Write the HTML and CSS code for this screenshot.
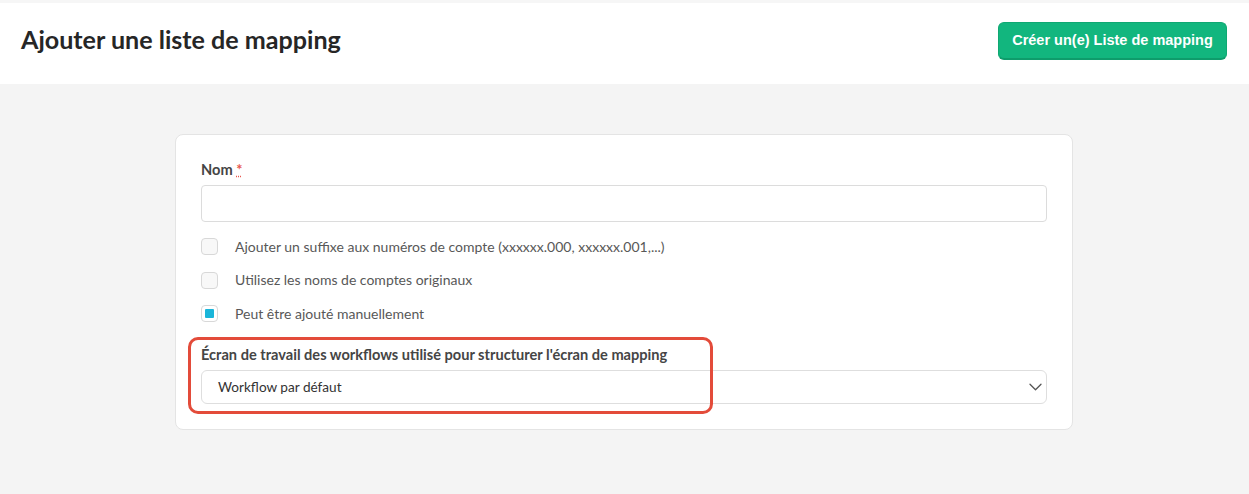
FILE: index.html
```html
<!DOCTYPE html>
<html lang="fr">
<head>
<meta charset="utf-8">
<link rel="stylesheet" href="styles.css">
</head>
<body>
<header class="topbar">
  <h1 class="title">Ajouter une liste de mapping</h1>
  <button class="btn-primary">Créer un(e) Liste de mapping</button>
</header>
<main class="content">
  <form class="card">
    <label class="field-label">Nom <abbr class="req" title="requis">*</abbr></label>
    <input class="text-input" type="text">
    <div class="checks">
      <label class="check"><span class="box"></span><span>Ajouter un suffixe aux numéros de compte (xxxxxx.000, xxxxxx.001,...)</span></label>
      <label class="check"><span class="box"></span><span>Utilisez les noms de comptes originaux</span></label>
      <label class="check"><span class="box checked"></span><span>Peut être ajouté manuellement</span></label>
    </div>
    <div class="select-group">
      <div class="highlight"></div>
      <label class="field-label">Écran de travail des workflows utilisé pour structurer l'écran de mapping</label>
      <div class="select">
        <span>Workflow par défaut</span>
        <svg class="chev" width="13" height="8" viewBox="0 0 13 8"><path d="M1 1.2l5.5 5.5 5.5-5.5" fill="none" stroke="#555" stroke-width="1.3" stroke-linecap="round" stroke-linejoin="round"/></svg>
      </div>
    </div>
  </form>
</main>
</body>
</html>
```

FILE: styles.css
```css
* { box-sizing: border-box; }
html, body { margin: 0; padding: 0; }
body {
  background: #f4f4f4;
  font-family: Lato, "Liberation Sans", sans-serif;
  width: 1249px;
  height: 494px;
  overflow: hidden;
}
.topbar {
  height: 84px;
  background: #fff;
  border-top: 3px solid #f6f6f6;
  display: flex;
  align-items: center;
  justify-content: space-between;
  padding: 0 22px 0 21px;
}
.title {
  margin: 0;
  font-size: 25.1px;
  font-weight: 700;
  color: #262626;
  padding-bottom: 10px;
}
.btn-primary {
  height: 38px;
  width: 229px;
  background: #12b67e;
  color: #fff;
  border: 1px solid #0fa872;
  border-bottom: 2px solid #0e9c6b;
  border-radius: 6px;
  font-family: "Liberation Sans", Arial, sans-serif;
  font-weight: 700;
  font-size: 14.5px;
  margin-top: -6px;
  padding: 0;
}
.content {
  padding: 50px 0 0 175px;
}
.card {
  width: 898px;
  height: 296px;
  background: #fff;
  border: 1px solid #e4e4e4;
  border-radius: 8px;
  padding: 26px 25px 0 25px;
  margin: 0;
}
.field-label {
  display: block;
  font-size: 14.6px;
  font-weight: 700;
  color: #454545;
  line-height: 18px;
  margin-bottom: 6px;
}
.req {
  color: #e8574e;
  text-decoration: underline dotted;
  text-decoration-color: #e8574e;
  font-weight: 700;
}
.text-input {
  display: block;
  width: 846px;
  height: 37px;
  border: 1px solid #dcdcdc;
  border-radius: 4px;
  margin: 0;
}
.checks {
  display: flex;
  flex-direction: column;
  gap: 16.5px;
  margin-top: 16px;
}
.check {
  display: flex;
  align-items: center;
  gap: 17px;
  font-size: 14px;
  color: #585858;
  font-weight: 400;
  line-height: 18px;
  height: 17px;
}
.box {
  width: 17px;
  height: 17px;
  border: 1px solid #d8d8d8;
  border-radius: 4px;
  background: #f8f8f8;
  display: flex;
  align-items: center;
  justify-content: center;
}
.box.checked { background: #fff; }
.box.checked::after {
  content: "";
  width: 9px;
  height: 9px;
  background: #1bb5d9;
  border-radius: 1px;
}
.select-group {
  position: relative;
  margin-top: 24px;
}
.highlight {
  position: absolute;
  left: -13px;
  top: -9px;
  width: 525px;
  height: 77px;
  border: 3px solid #e34b3a;
  border-radius: 10px;
  pointer-events: none;
}
.select {
  width: 846px;
  height: 34px;
  border: 1px solid #dedede;
  border-radius: 6px;
  display: flex;
  align-items: center;
  justify-content: space-between;
  padding: 0 4px 0 16px;
  font-size: 13.6px;
  color: #333;
}
```
